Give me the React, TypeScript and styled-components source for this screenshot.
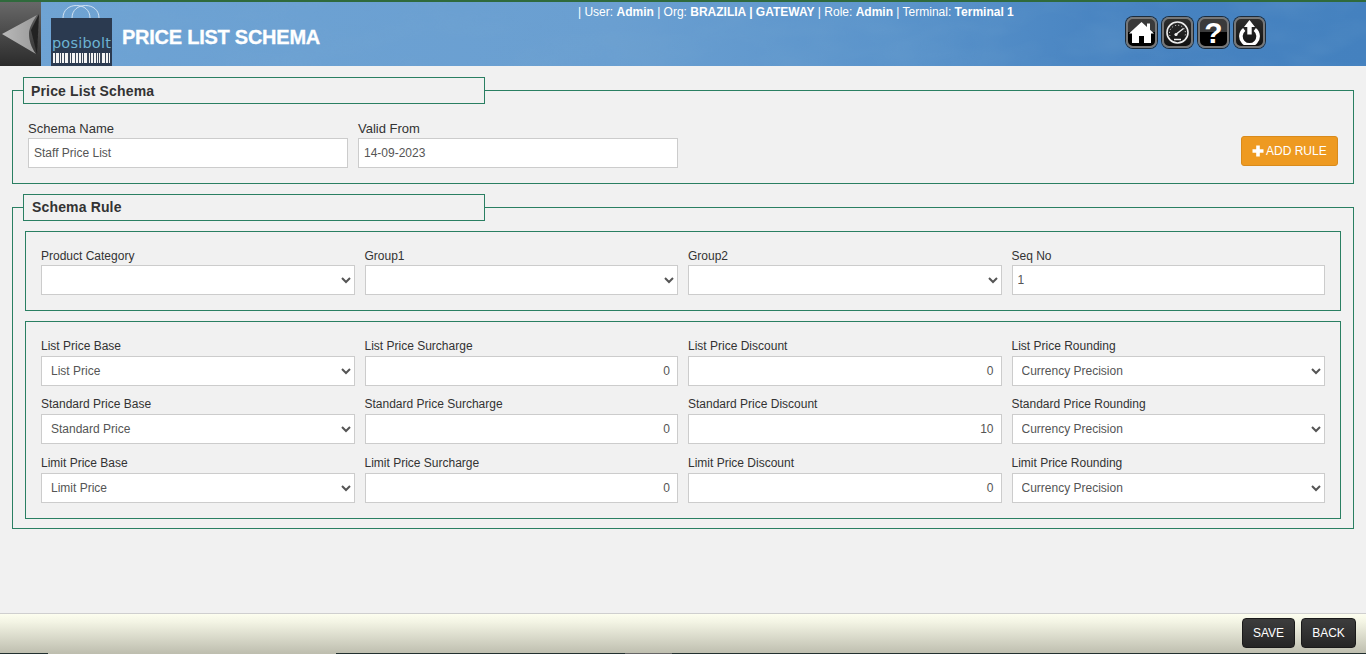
import React from 'react';
import styled, { createGlobalStyle } from 'styled-components';

const GlobalStyle = createGlobalStyle`
  html, body {
    margin: 0;
    height: 100%;
  }
  body {
    background: #f1f1f1;
    font-family: 'Liberation Sans', Arial, sans-serif;
    color: #333;
    overflow: hidden;
  }
`;

const Page = styled.div`
  display: flex;
  flex-direction: column;
  height: 100vh;
`;

const Header = styled.header`
  position: relative;
  display: flex;
  flex: none;
  height: 64px;
  border-top: 2px solid #2f6a3c;
  background: linear-gradient(90deg, #6ea3d4 0%, #6a9fd1 45%, #5b94cb 65%, #4783c1 82%, #4481bf 100%);
  overflow: hidden;
`;

const Texture = styled.svg`
  position: absolute;
  inset: 0;
  width: 100%;
  height: 100%;
`;

const BackButton = styled.button`
  position: relative;
  flex: none;
  width: 41px;
  padding: 0;
  border: 0;
  background: linear-gradient(#686868, #2b2b2b);
  cursor: pointer;
`;

const Logo = styled.svg`
  position: relative;
  flex: none;
  width: 61px;
  height: 64px;
  margin-left: 10px;
`;

const Title = styled.h1`
  position: relative;
  flex: none;
  width: 466px;
  box-sizing: border-box;
  margin: 0;
  padding: 24px 0 0 10px;
  font-size: 20px;
  line-height: 23px;
  letter-spacing: -0.25px;
  color: #fff;
  -webkit-text-stroke: 0.3px #fff;
`;

const UserInfo = styled.div`
  position: relative;
  flex: none;
  padding-top: 3px;
  font-size: 12px;
  line-height: 14px;
  color: #fff;

  b {
    font-weight: bold;
  }
`;

const Tools = styled.div`
  position: relative;
  display: flex;
  gap: 5px;
  margin-left: auto;
  margin-right: 101px;
  padding-top: 15px;
`;

const ToolButton = styled.button<{ $split?: boolean }>`
  display: flex;
  align-items: center;
  justify-content: center;
  box-sizing: border-box;
  width: 31px;
  height: 31px;
  padding: 0;
  border: 2px solid #777;
  border-radius: 7px;
  background: ${props =>
    props.$split ? 'linear-gradient(#3a3a3a 50%, #000 50%)' : 'linear-gradient(#2e2e2e, #111)'};
  box-shadow: 0 0 0 1px #1c2b3a;
  font: bold 30px/27px 'Liberation Sans', Arial, sans-serif;
  color: #fff;
  cursor: pointer;
`;

const Main = styled.main`
  flex: 1;
  padding: 11px 12px 0;
`;

const Group = styled.fieldset`
  margin: 0 0 10px;
  padding: 0;
  border: 1px solid #2a7f62;
  min-width: 0;
`;

const GroupTitle = styled.legend<{ $inset?: boolean }>`
  box-sizing: border-box;
  width: 462px;
  height: 27px;
  margin-left: 10px;
  padding: 0 7px 0 ${props => (props.$inset ? 8 : 7)}px;
  border: 1px solid #2a7f62;
  font-size: 14px;
  font-weight: bold;
  line-height: ${props => (props.$inset ? 24 : 26)}px;
  letter-spacing: 0.15px;
  color: #333;
`;

const SchemaRow = styled.div`
  display: flex;
  align-items: flex-end;
  gap: 10px;
  padding: 17px 15px 15px;
`;

const SchemaField = styled.label`
  display: block;
  width: 320px;
  font-size: 13px;
  line-height: 15px;

  input {
    margin-top: 2px;
  }
`;

const AddRule = styled.button`
  display: flex;
  align-items: center;
  gap: 2px;
  box-sizing: border-box;
  width: 97px;
  height: 30px;
  margin: 0 0 2px auto;
  padding: 0 0 0 10px;
  border: 1px solid #d98b1c;
  border-radius: 3px;
  background: #ee9a21;
  font: 12px 'Liberation Sans', Arial, sans-serif;
  color: #fff;
  cursor: pointer;
`;

const RuleBody = styled.div`
  padding: 10px 12px 9px;
`;

const Box = styled.div<{ $labelGap: number }>`
  display: grid;
  grid-template-columns: repeat(4, minmax(0, 1fr));
  gap: 12.4px 10px;
  padding: 18px 15px 15px;
  border: 1px solid #2a7f62;

  & + & {
    margin-top: 10px;
  }

  input,
  select {
    margin-top: ${props => props.$labelGap}px;
  }
`;

const Field = styled.label`
  display: block;
  font-size: 12px;
  line-height: 13px;
  color: #333;
`;

const controlStyle = `
  display: block;
  box-sizing: border-box;
  width: 100%;
  height: 30px;
  margin-top: 3px;
  border: 1px solid #ccc;
  border-radius: 0;
  background-color: #fff;
  font: 12px 'Liberation Sans', Arial, sans-serif;
  color: #555;
  outline: none;
`;

const TextInput = styled.input<{ $number?: boolean }>`
  ${controlStyle}
  padding: 0 5px;
  text-align: ${props => (props.$number ? 'right' : 'left')};
  ${props => props.$number && 'padding-right: 7px;'}
`;

const Select = styled.select`
  ${controlStyle}
  padding: 0 1px 0 5px;
`;

const Footer = styled.footer`
  display: flex;
  flex: none;
  justify-content: flex-end;
  align-items: flex-start;
  gap: 6px;
  box-sizing: border-box;
  height: 41px;
  padding: 4px 10px 0 0;
  border-top: 1px solid #cfcfcf;
  background:
    linear-gradient(
        90deg,
        #22302f 48px,
        transparent 48px,
        transparent 336px,
        #22302f 336px,
        #22302f 625px,
        #666 625px,
        #666 672px,
        #22302f 672px
      )
      bottom / 100% 1px no-repeat,
    linear-gradient(#fdfeef, #f3f4e4 20%, #bdbdae);
`;

const FooterButton = styled.button<{ $width: number }>`
  box-sizing: border-box;
  width: ${props => props.$width}px;
  height: 30px;
  padding: 0;
  border: 1px solid #1a1a1a;
  border-radius: 4px;
  background: linear-gradient(#3d3d3d, #262626);
  font: 12px 'Liberation Sans', Arial, sans-serif;
  color: #fff;
  cursor: pointer;
`;

const barcode = [2, 1, 3, 1, 1, 1, 2, 1, 3, 2, 1, 1, 3, 1, 2, 1, 2, 1, 1, 1, 3, 2, 1, 1, 2, 1, 2, 1, 1, 1, 1, 2, 3, 1, 2, 1, 3];

const BagLogo = () => {
  let x = 2;
  const bars = barcode.map((w, i) => {
    const bar = i % 2 === 1 ? <rect key={i} x={x} y={51} width={w} height={10} fill='#3a4657' /> : null;
    x += w;
    return bar;
  });

  return (
    <Logo viewBox='0 0 61 64'>
      <rect y='16' width='61' height='48' fill='#2b3a50' />
      <g fill='none' stroke='#e8f0f8' strokeWidth='0.8'>
        <path d='M12 16 C12 8 18 3.5 25.5 3.5 C33 3.5 39 8 39 16' />
        <path d='M21 16 C21 8 27 3.5 34.5 3.5 C42 3.5 48 8 48 16' />
      </g>
      <text x='30.5' y='46' textAnchor='middle' fontFamily="'DejaVu Sans', sans-serif" fontSize='14.5' letterSpacing='0.2' fill='#6cb3d3'>
        posibolt
      </text>
      <rect x='2' y='51' width='57' height='10' fill='#f4f4f4' />
      {bars}
    </Logo>
  );
};

const HomeIcon = () => (
  <svg width='25' height='25' viewBox='0 0 25 25'>
    <path fill='#fff' d='M12.5 2 L18 7 V3.5 H21 V9.8 L25 13.5 H22 V23 H15 V16 H10 V23 H3 V13.5 H0 Z' />
  </svg>
);

const GaugeIcon = () => (
  <svg width='25' height='25' viewBox='0 0 25 25' fill='none' stroke='#eee'>
    <circle cx='12.5' cy='12.5' r='10.5' strokeWidth='1.6' />
    <path strokeWidth='1' strokeDasharray='1 2.2' d='M5 16 A8 8 0 1 1 20 16' />
    <path strokeWidth='1.5' d='M10 15 L18.5 8.5' />
    <circle cx='11' cy='14.5' r='1.6' fill='#eee' stroke='none' />
    <path strokeWidth='1.5' d='M9 19.5 H16' />
  </svg>
);

const PowerIcon = () => (
  <svg width='25' height='25' viewBox='0 0 25 25' fill='none'>
    <path stroke='#fff' strokeWidth='3.6' d='M7.2 9.5 A8.6 8.6 0 1 0 17.8 9.5' />
    <path fill='#fff' d='M12.5 0 L18 7 H14.7 V14.5 H10.3 V7 H7 Z' />
  </svg>
);

const PlusIcon = () => (
  <svg width='12' height='12' viewBox='0 0 12 12'>
    <path fill='#fff' d='M4.2 0.5 H7.8 V4.2 H11.5 V7.8 H7.8 V11.5 H4.2 V7.8 H0.5 V4.2 H4.2 Z' />
  </svg>
);

const priceRows = [
  { name: 'List', base: 'List Price', surcharge: '0', discount: '0' },
  { name: 'Standard', base: 'Standard Price', surcharge: '0', discount: '10' },
  { name: 'Limit', base: 'Limit Price', surcharge: '0', discount: '0' },
];

export default function App() {
  return (
    <Page>
      <GlobalStyle />
      <Header>
        <Texture preserveAspectRatio='none'>
          <filter id='water'>
            <feTurbulence type='fractalNoise' baseFrequency='0.012 0.03' numOctaves='3' seed='8' />
            <feColorMatrix values='0 0 0 0 0.18  0 0 0 0 0.38  0 0 0 0 0.62  0.9 0 0 0 -0.3' />
          </filter>
          <rect width='100%' height='100%' filter='url(#water)' opacity='0.5' />
        </Texture>
        <BackButton aria-label='Back'>
          <svg width='41' height='64' viewBox='0 0 41 64'>
            <defs>
              <linearGradient id='arrow' x1='0' x2='1' y1='0' y2='0'>
                <stop offset='0' stopColor='#b9b9b9' />
                <stop offset='1' stopColor='#9a9a9a' />
              </linearGradient>
              <filter id='soft'>
                <feGaussianBlur stdDeviation='0.6' />
              </filter>
            </defs>
            <path fill='#222' filter='url(#soft)' d='M31 28 L39 12 L37 52 Z' />
            <path fill='url(#arrow)' filter='url(#soft)' d='M2 32 L37 13 C31 22 29 27 29 32 C29 38 31 45 36 52 Z' />
          </svg>
        </BackButton>
        <BagLogo />
        <Title>PRICE LIST SCHEMA</Title>
        <UserInfo>
          | User: <b>Admin</b> | Org: <b>BRAZILIA | GATEWAY</b> | Role: <b>Admin</b> | Terminal: <b>Terminal 1</b>
        </UserInfo>
        <Tools>
          <ToolButton $split aria-label='Home'>
            <HomeIcon />
          </ToolButton>
          <ToolButton aria-label='Dashboard'>
            <GaugeIcon />
          </ToolButton>
          <ToolButton $split aria-label='Help'>
            ?
          </ToolButton>
          <ToolButton aria-label='Log out'>
            <PowerIcon />
          </ToolButton>
        </Tools>
      </Header>

      <Main>
        <Group>
          <GroupTitle>Price List Schema</GroupTitle>
          <SchemaRow>
            <SchemaField>
              Schema Name
              <TextInput defaultValue='Staff Price List' />
            </SchemaField>
            <SchemaField>
              Valid From
              <TextInput defaultValue='14-09-2023' />
            </SchemaField>
            <AddRule>
              <PlusIcon />
              ADD RULE
            </AddRule>
          </SchemaRow>
        </Group>

        <Group>
          <GroupTitle $inset>Schema Rule</GroupTitle>
          <RuleBody>
            <Box $labelGap={2}>
              <Field>
                Product Category
                <Select />
              </Field>
              <Field>
                Group1
                <Select />
              </Field>
              <Field>
                Group2
                <Select />
              </Field>
              <Field>
                Seq No
                <TextInput defaultValue='1' />
              </Field>
            </Box>
            <Box $labelGap={3}>
              {priceRows.map(row => (
                <React.Fragment key={row.name}>
                  <Field>
                    {row.name} Price Base
                    <Select defaultValue={row.base}>
                      <option>{row.base}</option>
                    </Select>
                  </Field>
                  <Field>
                    {row.name} Price Surcharge
                    <TextInput $number defaultValue={row.surcharge} />
                  </Field>
                  <Field>
                    {row.name} Price Discount
                    <TextInput $number defaultValue={row.discount} />
                  </Field>
                  <Field>
                    {row.name} Price Rounding
                    <Select defaultValue='Currency Precision'>
                      <option>Currency Precision</option>
                    </Select>
                  </Field>
                </React.Fragment>
              ))}
            </Box>
          </RuleBody>
        </Group>
      </Main>

      <Footer>
        <FooterButton $width={53}>SAVE</FooterButton>
        <FooterButton $width={55}>BACK</FooterButton>
      </Footer>
    </Page>
  );
}
